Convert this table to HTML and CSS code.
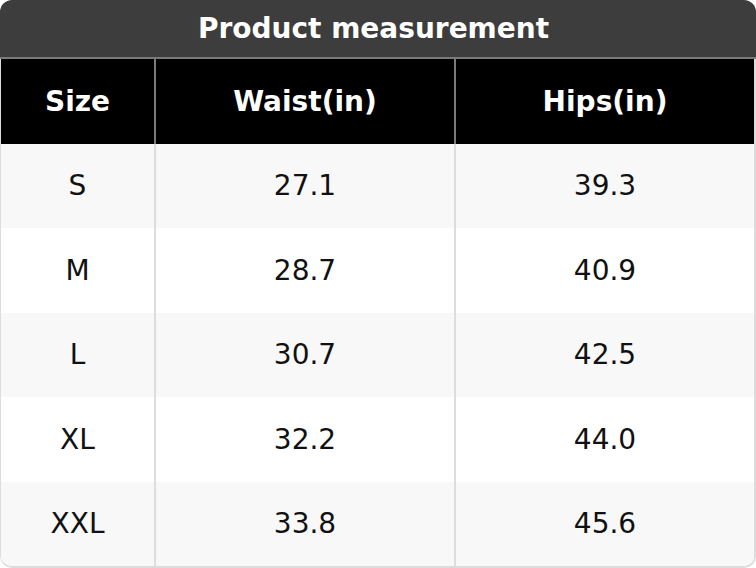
FILE: index.html
```html
<!DOCTYPE html>
<html>
<head>
<meta charset="utf-8">
<link rel="stylesheet" href="styles.css">
</head>
<body>
<div class="card">
  <div class="title">Product measurement</div>
  <div class="table">
    <div class="row head">
      <div class="cell">Size</div>
      <div class="cell">Waist(in)</div>
      <div class="cell">Hips(in)</div>
    </div>
    <div class="row odd">
      <div class="cell">S</div>
      <div class="cell">27.1</div>
      <div class="cell">39.3</div>
    </div>
    <div class="row">
      <div class="cell">M</div>
      <div class="cell">28.7</div>
      <div class="cell">40.9</div>
    </div>
    <div class="row odd">
      <div class="cell">L</div>
      <div class="cell">30.7</div>
      <div class="cell">42.5</div>
    </div>
    <div class="row">
      <div class="cell">XL</div>
      <div class="cell">32.2</div>
      <div class="cell">44.0</div>
    </div>
    <div class="row odd">
      <div class="cell">XXL</div>
      <div class="cell">33.8</div>
      <div class="cell">45.6</div>
    </div>
  </div>
</div>
</body>
</html>
```

FILE: styles.css
```css
html, body {
  margin: 0;
  padding: 0;
  background: #ffffff;
}

.card {
  width: 756px;
  height: 568px;
  box-sizing: border-box;
  border-radius: 12px;
  overflow: hidden;
  display: flex;
  flex-direction: column;
  font-family: "DejaVu Sans", sans-serif;
  font-size: 28px;
}

.title {
  height: 59px;
  flex: none;
  box-sizing: border-box;
  padding-right: 9px;
  background: #3d3d3d;
  color: #ffffff;
  font-weight: bold;
  display: flex;
  align-items: center;
  justify-content: center;
  border-bottom: 2px solid #7a7a7a;
}

.table {
  flex: 1;
  display: flex;
  flex-direction: column;
  border: 2px solid #dcdcdc;
  border-left-width: 1px;
  border-top: none;
  border-radius: 0 0 12px 12px;
  overflow: hidden;
}

.row {
  flex: 1;
  display: grid;
  grid-template-columns: 153px 300px 1fr;
  background: #ffffff;
  color: #111111;
}

.row.odd {
  background: #f8f8f8;
}

.cell {
  display: flex;
  align-items: center;
  justify-content: center;
}

.cell + .cell {
  border-left: 2px solid #dddddd;
}

.row.head {
  background: #000000;
  color: #ffffff;
  font-weight: bold;
}

.row.head .cell + .cell {
  border-left: 2px solid #7a7a7a;
}
```
